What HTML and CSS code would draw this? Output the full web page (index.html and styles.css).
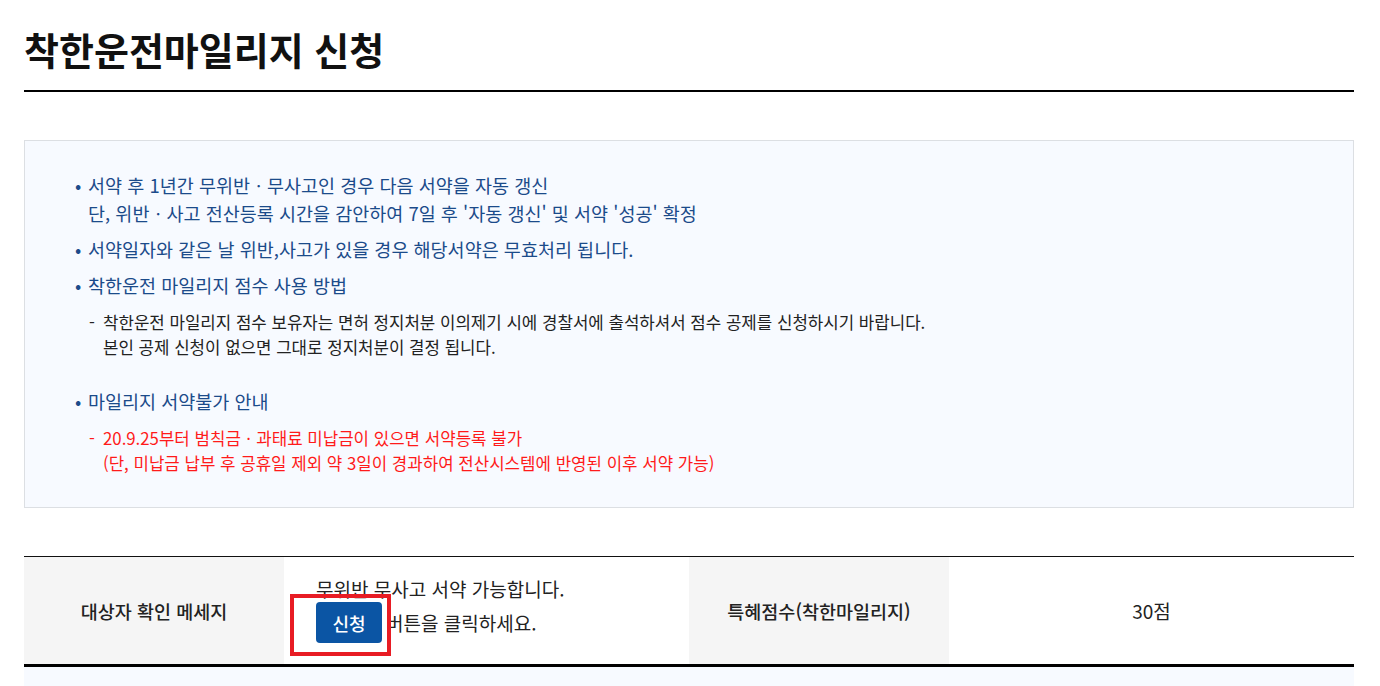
FILE: index.html
```html
<!DOCTYPE html>
<html lang="ko">
<head>
<meta charset="utf-8">
<title>착한운전마일리지 신청</title>
<link rel="stylesheet" href="styles.css">
</head>
<body>
<div class="page">
  <h1 class="title">착한운전마일리지 신청</h1>

  <div class="notice">
    <ul class="notice-list">
      <li class="item">서약 후 1년간 무위반ㆍ무사고인 경우 다음 서약을 자동 갱신<br>단, 위반ㆍ사고 전산등록 시간을 감안하여 7일 후 '자동 갱신' 및 서약 '성공' 확정</li>
      <li class="item">서약일자와 같은 날 위반,사고가 있을 경우 해당서약은 무효처리 됩니다.</li>
      <li class="item">착한운전 마일리지 점수 사용 방법
        <p class="sub">착한운전 마일리지 점수 보유자는 면허 정지처분 이의제기 시에 경찰서에 출석하셔서 점수 공제를 신청하시기 바랍니다.<br>본인 공제 신청이 없으면 그대로 정지처분이 결정 됩니다.</p>
      </li>
      <li class="item item-gap">마일리지 서약불가 안내
        <p class="sub sub-red">20.9.25부터 범칙금ㆍ과태료 미납금이 있으면 서약등록 불가<br>(단, 미납금 납부 후 공휴일 제외 약 3일이 경과하여 전산시스템에 반영된 이후 서약 가능)</p>
      </li>
    </ul>
  </div>

  <div class="info-table">
    <div class="cell head">대상자 확인 메세지</div>
    <div class="cell body msg">
      <p class="msg-line">무위반 무사고 서약 가능합니다.</p>
      <p class="msg-line msg-action"><button class="btn" type="button">신청</button>버튼을 클릭하세요.</p>
      <span class="highlight"></span>
    </div>
    <div class="cell head">특혜점수(착한마일리지)</div>
    <div class="cell body center">30점</div>
  </div>

  <div class="next-box"></div>
</div>
</body>
</html>
```

FILE: styles.css
```css
* { box-sizing: border-box; }
html, body { margin: 0; padding: 0; background: #fff; }
body {
  font-family: "Noto Sans CJK KR", "Noto Sans", sans-serif;
  color: #222;
  overflow: hidden;
}
.page {
  width: 1330px;
  margin-left: 24px;
  padding-top: 24px;
}
.title {
  margin: 0;
  font-size: 38px;
  font-weight: 700;
  color: #111;
  line-height: 50px;
  letter-spacing: 0;
  padding-bottom: 16px;
  border-bottom: 2px solid #000;
}
.notice {
  margin-top: 48px;
  border: 1px solid #dcdfe3;
  background: #f7faff;
  padding: 30px 30px 23px 50px;
}
.notice-list {
  list-style: none;
  margin: 0;
  padding: 0;
}
.item {
  font-size: 18.5px;
  line-height: 28px;
  color: #1b4b8a;
  letter-spacing: 0;
  padding-left: 13px;
  text-indent: -13px;
  margin-bottom: 8px;
}
.item::before {
  content: "•";
  display: inline-block;
  width: 13px;
  text-indent: 0;
}
.item-gap { margin-top: 27px; }
.sub {
  margin: 11px 0 0 1px;
  font-size: 16.8px;
  line-height: 25px;
  color: #222;
  letter-spacing: 0;
  padding-left: 14px;
  text-indent: -14px;
}
.sub::before {
  content: "-";
  display: inline-block;
  width: 14px;
  text-indent: 0;
}
.sub-red { color: #ff1a1a; }

.info-table {
  margin-top: 48px;
  display: grid;
  grid-template-columns: 260px 405px 260px 405px;
  border-top: 1px solid #111;
  border-bottom: 3px solid #000;
  height: 111px;
}
.cell {
  display: flex;
  align-items: center;
  font-size: 19px;
  letter-spacing: 0;
}
.head {
  background: #f5f5f5;
  justify-content: center;
  font-weight: 500;
  font-size: 18.5px;
  color: #222;
}
.body { background: #fff; }
.center { justify-content: center; }
.msg {
  position: relative;
  flex-direction: column;
  align-items: flex-start;
  justify-content: flex-start;
  padding: 18px 0 0 32px;
}
.msg-line {
  margin: 0;
  line-height: 27px;
  color: #222;
}
.msg-action {
  display: flex;
  align-items: center;
  margin-top: 0;
}
.btn {
  font-family: inherit;
  width: 66px;
  height: 41px;
  margin-right: 4px;
  border: 0;
  border-radius: 4px;
  background: #0b55a4;
  color: #fff;
  font-size: 18px;
  font-weight: 500;
  letter-spacing: 0;
  padding: 0;
}
.highlight {
  position: absolute;
  left: 6px;
  top: 37px;
  width: 101px;
  height: 62px;
  border: 4px solid #e81c24;
}
.next-box {
  height: 40px;
  background: #f7faff;
}
```
